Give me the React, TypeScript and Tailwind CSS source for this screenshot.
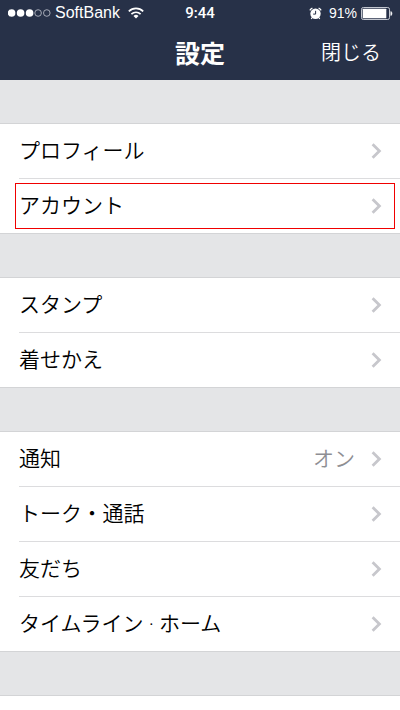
import clsx from "clsx";

interface Item {
  label: string;
  value?: string;
  marked?: boolean;
}

const GROUPS: Item[][] = [
  [{ label: "プロフィール" }, { label: "アカウント", marked: true }],
  [{ label: "スタンプ" }, { label: "着せかえ" }],
  [
    { label: "通知", value: "オン" },
    { label: "トーク・通話" },
    { label: "友だち" },
    { label: "タイムライン · ホーム" },
  ],
];

function Signal() {
  return (
    <svg width="44" height="10" viewBox="0 0 44 10" className="shrink-0" aria-hidden="true">
      {[4, 13, 22].map(x => <circle key={x} cx={x - 0.4} cy="5" r="3.8" fill="#fff" />)}
      {[30.1, 38.8].map(x => <circle key={x} cx={x} cy="5" r="3.3" fill="none" stroke="#c3c7d0" strokeWidth="0.8" />)}
    </svg>
  );
}

function Wifi() {
  return (
    <svg width="16" height="12" viewBox="0 0 16 12" fill="none" stroke="#fff" strokeWidth="1.7" className="shrink-0" aria-hidden="true">
      <path d="M0.8 4.3a10.3 10.3 0 0 1 14.4 0" />
      <path d="M3.4 7.1a6.6 6.6 0 0 1 9.2 0" />
      <path d="M8 11.5L5.5 9a3.6 3.6 0 0 1 5 0z" fill="#fff" stroke="none" />
    </svg>
  );
}

function Alarm() {
  return (
    <svg width="13" height="13" viewBox="0 0 13 13" className="shrink-0" aria-hidden="true">
      <circle cx="6.5" cy="6.8" r="5.2" fill="#fff" />
      <path d="M0.8 3.4a7 7 0 0 1 2.6-2.4M12.2 3.4a7 7 0 0 0-2.6-2.4" fill="none" stroke="#fff" strokeWidth="1.2" />
      <path d="M3.2 10.6l-1 1.4M9.8 10.6l1 1.4" fill="none" stroke="#fff" strokeWidth="1.1" />
      <path d="M6.6 3.8v3.3H4.2" fill="none" stroke="#273148" strokeWidth="1" />
    </svg>
  );
}

function Battery() {
  return (
    <svg width="32" height="13" viewBox="0 0 32 13" className="shrink-0" aria-hidden="true">
      <rect x="0.5" y="0.5" width="28" height="12" rx="1.8" fill="none" stroke="#c3c7d0" />
      <rect x="1.7" y="1.7" width="23.6" height="9.6" rx="0.6" fill="#fff" />
      <path d="M29.8 4.4c1.5 0.5 1.5 3.7 0 4.2z" fill="#fff" stroke="#fff" strokeWidth="0.6" />
    </svg>
  );
}

function Chevron() {
  return (
    <svg width="11" height="16" viewBox="0 0 11 16" fill="none" stroke="#c7c7cc" strokeWidth="2.8" className="shrink-0" aria-hidden="true">
      <path d="M1.6 1.2L8.4 8l-6.8 6.8" />
    </svg>
  );
}

function Row({ item, last }: { item: Item; last: boolean }) {
  return (
    <li className="relative">
      <button type="button" className={clsx("flex w-full text-left", !last && "pl-[19px]")}>
        <span
          className={clsx(
            "flex h-[55px] flex-1 items-center border-b pr-[18px]",
            last ? "border-[#d3d4d6] pl-[19px]" : "border-[#dcdcde]"
          )}
        >
          <span className="flex-1 text-[21px] leading-8 font-[350] text-black">{item.label}</span>
          {item.value && <span className="mr-4 text-[21px] leading-8 font-[350] text-[#8e8e93]">{item.value}</span>}
          <Chevron />
        </span>
      </button>
      {item.marked && (
        <span className="pointer-events-none absolute top-1 right-[5px] bottom-[5px] left-[15px] border border-[#f00000]" />
      )}
    </li>
  );
}

export default function App() {
  return (
    <div className="min-h-screen bg-[#e4e5e7] font-['Liberation_Sans','Noto_Sans_CJK_JP',sans-serif]">
      <header className="bg-[#273148] text-white">
        <div className="grid h-[26px] grid-cols-[1fr_auto_1fr] items-center px-[7px] leading-5">
          <div className="flex items-center pl-px">
            <Signal />
            <span className="mr-2 ml-[3px] text-[16px]">SoftBank</span>
            <Wifi />
          </div>
          <time className="font-['Roboto',sans-serif] text-[15px] font-medium">9:44</time>
          <div className="flex items-center justify-end text-[14px]">
            <Alarm />
            <span className="mr-1 ml-[7px]">91%</span>
            <Battery />
          </div>
        </div>
        <div className="grid h-[54px] grid-cols-[1fr_auto_1fr] items-center pb-[3px] font-['Noto_Sans_CJK_JP',sans-serif]">
          <h1 className="col-start-2 text-[25px] leading-9 font-bold">設定</h1>
          <button type="button" className="mr-[19px] justify-self-end text-[20px] leading-8 font-[350]">閉じる</button>
        </div>
      </header>

      <main className="flex flex-col gap-[43px] pt-[43px] font-['Roboto','Noto_Sans_CJK_JP',sans-serif]">
        {GROUPS.map((items, g) => (
          <ul key={g} className="border-t border-[#d3d4d6] bg-white">
            {items.map((item, i) => (
              <Row key={item.label} item={item} last={i === items.length - 1} />
            ))}
          </ul>
        ))}
        <div className="h-[15px] border-t border-[#d3d4d6] bg-white" />
      </main>
    </div>
  );
}
